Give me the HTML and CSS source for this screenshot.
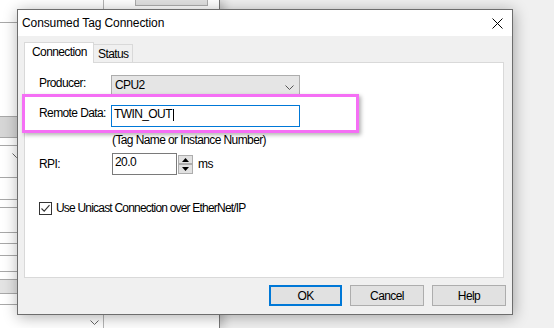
FILE: index.html
```html
<!DOCTYPE html>
<html lang="en">
<head>
    <meta charset="UTF-8">
    <title>Consumed Tag Connection</title>
    <link rel="stylesheet" href="styles.css">
</head>
<body>
    <!-- window behind the dialog -->
    <div class="behind">
        <div class="col-a">
            <div class="cell h23"></div>
            <div class="cell h94"></div>
            <div class="cell h21 band"></div>
            <div class="cell h8"></div>
            <div class="cell h32">
                <svg class="grid-chev first" width="9" height="5" viewBox="0 0 9 5"><path d="M0.5 0.5 L4.5 4.5 L8.5 0.5" fill="none" stroke="#666"/></svg>
            </div>
            <div class="cell h22"></div>
            <div class="cell h8"></div>
            <div class="cell h25"></div>
            <div class="cell h11"></div>
            <div class="cell h12"></div>
            <div class="cell h16"></div>
            <div class="cell h8"></div>
            <div class="cell h14 band light"></div>
            <div class="cell h11"></div>
            <div class="cell last">
                <svg class="grid-chev" width="9" height="5" viewBox="0 0 9 5"><path d="M0.5 0.5 L4.5 4.5 L8.5 0.5" fill="none" stroke="#666"/></svg>
            </div>
        </div>
        <div class="col-b">
            <div class="create-btn">Create</div>
        </div>
    </div>

    <div class="dialog">
        <div class="titlebar">
            <span class="title">Consumed Tag Connection</span>
            <svg class="close" width="11" height="11" viewBox="0 0 11 11"><path d="M0.5 0.5 L10.5 10.5 M10.5 0.5 L0.5 10.5" stroke="#000" stroke-width="1"/></svg>
        </div>
        <div class="dlg-body">
            <div class="tabs">
                <div class="tab active">Connection</div>
                <div class="tab">Status</div>
            </div>
            <div class="panel">
                <div class="row row-producer">
                    <span class="label">Producer:</span>
                    <div class="select">
                        <span>CPU2</span>
                        <svg width="9" height="5" viewBox="0 0 9 5"><path d="M0.5 0.5 L4.5 4.5 L8.5 0.5" fill="none" stroke="#555"/></svg>
                    </div>
                </div>
                <div class="row row-remote">
                    <span class="label">Remote Data:</span>
                    <div class="textbox focused">TWIN_OUT<span class="caret"></span></div>
                </div>
                <div class="hint">(Tag Name or Instance Number)</div>
                <div class="row row-rpi">
                    <span class="label">RPI:</span>
                    <div class="textbox rpi">20.0</div>
                    <div class="spin">
                        <div class="spin-btn up"><svg width="7" height="4" viewBox="0 0 7 4"><path d="M3.5 0 L7 4 L0 4 Z" fill="#000"/></svg></div>
                        <div class="spin-btn down"><svg width="7" height="4" viewBox="0 0 7 4"><path d="M0 0 L7 0 L3.5 4 Z" fill="#000"/></svg></div>
                    </div>
                    <span class="unit">ms</span>
                </div>
                <div class="check-row">
                    <span class="checkbox">
                        <svg width="11" height="11" viewBox="0 0 11 11"><path d="M1.5 5.5 L4.2 8.2 L9.5 2.2" fill="none" stroke="#333" stroke-width="1.1"/></svg>
                    </span>
                    <span class="check-text">Use Unicast Connection over EtherNet/IP</span>
                </div>
            </div>
            <div class="buttons">
                <div class="btn default">OK</div>
                <div class="btn">Cancel</div>
                <div class="btn">Help</div>
            </div>
        </div>
        <div class="highlight"></div>
    </div>
</body>
</html>
```

FILE: styles.css
```css
* {
    box-sizing: border-box;
}
body {
    margin: 0;
    width: 554px;
    height: 328px;
    overflow: hidden;
    position: relative;
    background-color: #f0f0f0;
    font-family: "Liberation Sans", Arial, sans-serif;
    font-size: 12px;
    letter-spacing: -0.6px;
    line-height: 14px;
    color: #000;
}

/* background window */
.behind {
    width: 220px;
    height: 328px;
    display: flex;
    background-color: #fff;
    border-right: 1px solid #777;
    box-shadow: 4px 0 9px rgba(0,0,0,0.2);
}
.col-a {
    width: 104px;
    display: flex;
    flex-direction: column;
    border-right: 1px solid #b5b5b5;
}
.cell {
    flex: none;
    border-bottom: 1px solid #a8a8a8;
    display: flex;
}
.cell.band {
    background-color: #d6d6d6;
}
.cell.band.light {
    background-color: #e3e3e3;
}
.h8 { height: 8px; }
.h11 { height: 11px; }
.h12 { height: 12px; }
.h14 { height: 14px; }
.h16 { height: 16px; }
.h21 { height: 21px; }
.h22 { height: 22px; }
.h23 { height: 23px; }
.h25 { height: 25px; }
.h32 { height: 32px; }
.h94 { height: 94px; }
.cell.last {
    flex: 1;
    border-bottom: none;
    justify-content: flex-end;
}
.grid-chev {
    margin: 15px 4px 0 0;
}
.grid-chev.first {
    margin: 7px 0 0 12px;
}
.col-b {
    flex: 1;
}
.create-btn {
    width: 73px;
    height: 22px;
    margin: -16px 0 0 31px;
    background-color: #e1e1e1;
    border: 1px solid #adadad;
    text-align: center;
    line-height: 18px;
}

/* dialog */
.dialog {
    position: absolute;
    left: 17px;
    top: 9px;
    width: 496px;
    height: 306px;
    border: 1px solid #6d6d6d;
    background-color: #f0f0f0;
    box-shadow: 1px 2px 14px rgba(0,0,0,0.32);
    display: flex;
    flex-direction: column;
}
.titlebar {
    height: 26px;
    background-color: #fff;
    display: flex;
    align-items: center;
    justify-content: space-between;
    padding: 0 9px 0 4px;
}
.title {
    letter-spacing: -0.1px;
}
.dlg-body {
    flex: 1;
    padding: 6px 6px 8px 6px;
    display: flex;
    flex-direction: column;
}
.tabs {
    height: 20px;
    display: flex;
    align-items: flex-end;
}
.tab {
    height: 18px;
    width: 39px;
    padding: 2px 0 0 4px;
    background-color: #f0f0f0;
    border: 1px solid #d9d9d9;
    border-left: none;
    border-bottom: none;
}
.tab.active {
    position: relative;
    z-index: 1;
    height: 21px;
    width: 70px;
    margin-bottom: -1px;
    padding: 2px 0 0 7px;
    background-color: #fff;
    border-left: 1px solid #d9d9d9;
}
.panel {
    width: 480px;
    height: 216px;
    background-color: #fff;
    border: 1px solid #d9d9d9;
    padding: 0 0 0 14px;
    display: flex;
    flex-direction: column;
}
.row {
    display: flex;
    align-items: flex-start;
}
.label {
    width: 72px;
    margin-top: 1px;
}
.row-producer {
    margin-top: 12px;
}
.row-remote {
    margin-top: 9px;
}
.row-rpi {
    margin-top: 6px;
}
.row-rpi .label {
    width: 73px;
    margin-top: 4px;
}
.select {
    width: 189px;
    height: 21px;
    background-color: #e5e5e5;
    border: 1px solid #adadad;
    padding: 2px 5px 0 3px;
    display: flex;
    justify-content: space-between;
}
.select svg {
    margin-top: 7px;
}
.textbox {
    height: 22px;
    background-color: #fff;
    border: 1px solid #7a7a7a;
    padding: 1px 2px 0 2px;
    display: flex;
    align-items: flex-start;
}
.textbox.focused {
    width: 189px;
    border-color: #0078d7;
}
.caret {
    width: 1px;
    height: 12px;
    margin: 2px 0 0 1px;
    background-color: #000;
}
.textbox.rpi {
    width: 65px;
    padding-top: 1px;
}
.spin {
    margin: 2px 0 0 1px;
    display: flex;
    flex-direction: column;
}
.spin-btn {
    width: 15px;
    height: 9px;
    background-color: #e1e1e1;
    border: 1px solid #adadad;
    display: flex;
    align-items: center;
    justify-content: center;
}
.spin-btn.down {
    height: 10px;
}
.unit {
    margin: 4px 0 0 5px;
}
.hint {
    margin: 6px 0 0 73px;
}
.check-row {
    margin-top: 26px;
    display: flex;
    align-items: flex-start;
}
.check-text {
    letter-spacing: -0.8px;
}
.checkbox {
    width: 13px;
    height: 13px;
    margin: 1px 4px 0 0;
    border: 1px solid #333;
    background-color: #fff;
    display: flex;
    align-items: center;
    justify-content: center;
}
.buttons {
    margin-top: 7px;
    display: flex;
    justify-content: flex-end;
    gap: 8px;
}
.btn {
    width: 74px;
    height: 21px;
    background-color: #e1e1e1;
    border: 1px solid #adadad;
    display: flex;
    align-items: center;
    justify-content: center;
}
.btn.default {
    width: 73px;
    border: 2px solid #0078d7;
}

/* annotation box drawn over the dialog */
.highlight {
    position: absolute;
    left: 4px;
    top: 84px;
    width: 337px;
    height: 39px;
    border: 3px solid #f56ff5;
    box-shadow: 2px 2px 4px rgba(0,0,0,0.3);
}
```
